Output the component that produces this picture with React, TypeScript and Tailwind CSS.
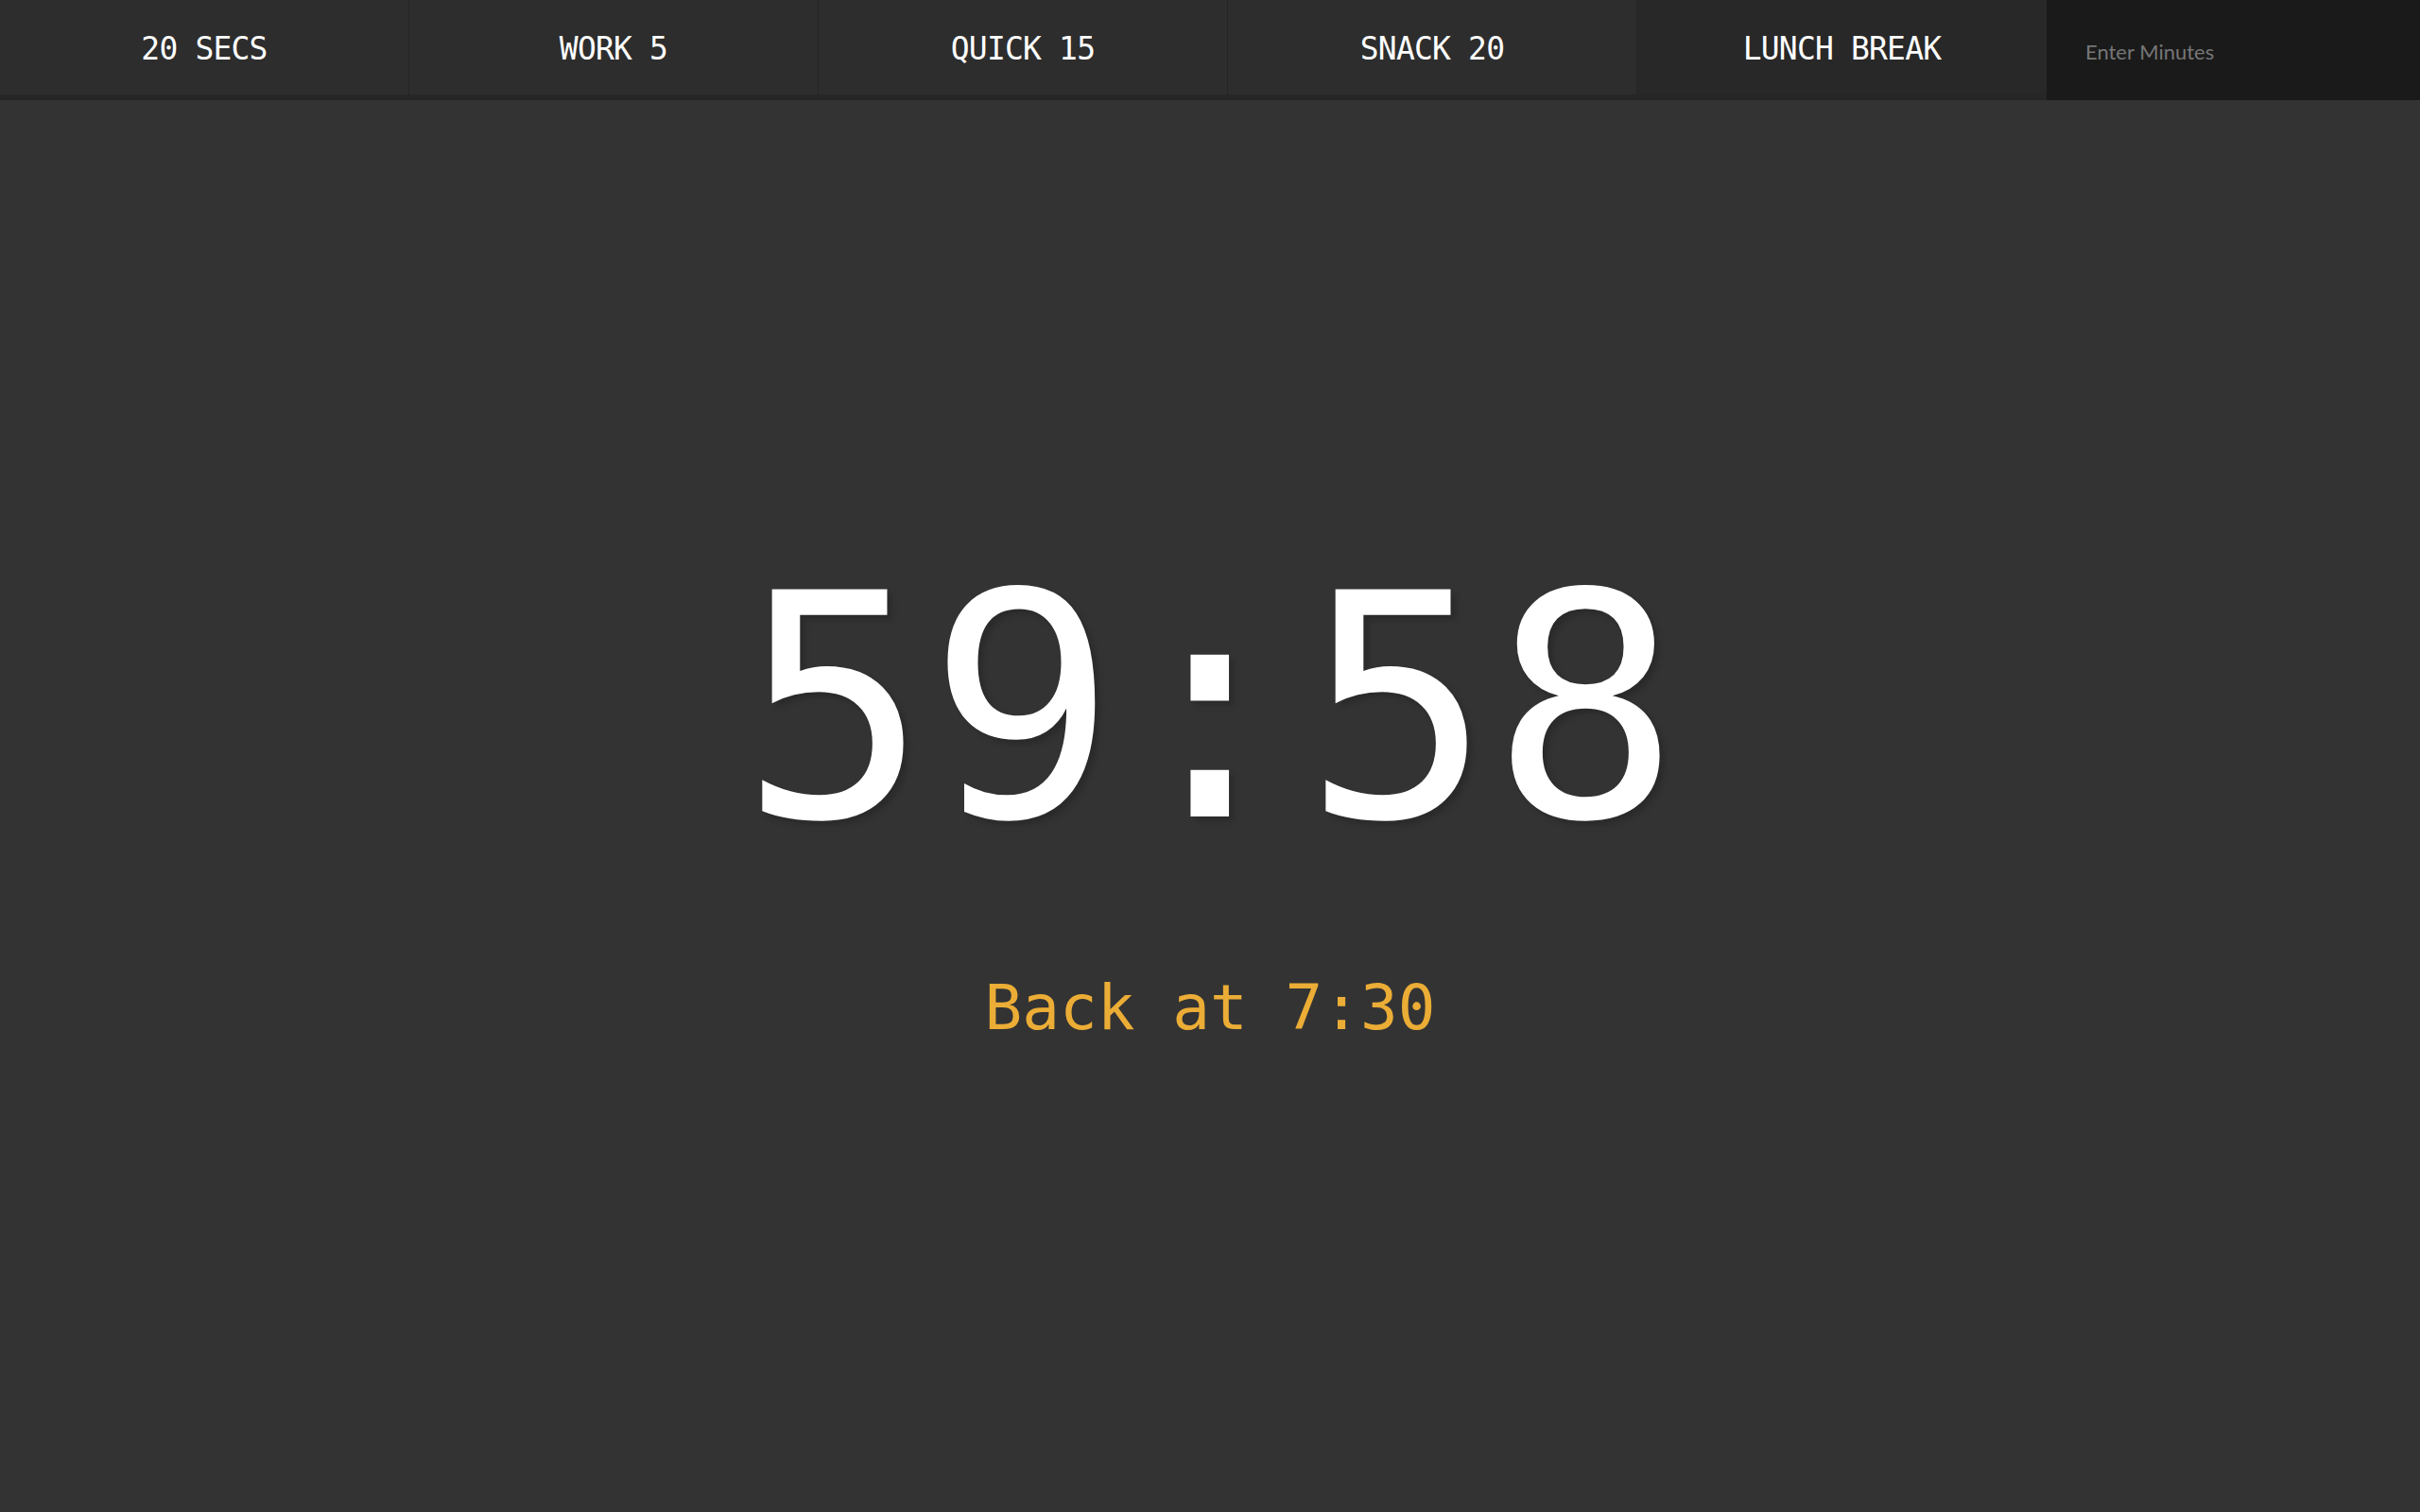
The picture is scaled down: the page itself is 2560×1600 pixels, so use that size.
import React from "react";

const presets = ["20 SECS", "WORK 5", "QUICK 15", "SNACK 20", "LUNCH BREAK"];

export default function App() {
    return (
        <div className="min-h-screen w-full bg-[#333333] flex flex-col">
            <nav className="flex h-[106px] shrink-0">
                {presets.map((label, i) => (
                    <button
                        key={label}
                        className={
                            i === presets.length - 1
                                ? "w-[433px] h-[106px] border-b-[6px] border-[#262626] bg-[#282828] text-white text-[33px] font-['DejaVu_Sans_Mono',monospace] tracking-tight flex items-center justify-center pt-[4px]"
                                : "w-[433px] h-[106px] border-b-[6px] border-b-[#262626] border-r border-r-[#252525] bg-[#2d2d2d] text-white text-[33px] font-['DejaVu_Sans_Mono',monospace] tracking-tight flex items-center justify-center pt-[4px]"
                        }
                    >
                        {label}
                    </button>
                ))}
                <input
                    placeholder="Enter Minutes"
                    className="flex-1 h-[106px] bg-[#1a1a1a] pl-[41px] pt-[2px] text-[22px] text-white placeholder:text-[#767676] font-['Lato',sans-serif] outline-none"
                />
            </nav>

            <main className="flex flex-col items-center pt-[479px]">
                <div className="text-white text-[330px] leading-none font-['DejaVu_Sans_Mono',monospace] [text-shadow:5px_5px_6px_rgba(0,0,0,0.18)]">
                    59:58
                </div>
                <div className="mt-[119px] text-[#ebad36] text-[66px] leading-none font-['DejaVu_Sans_Mono',monospace]">
                    Back at 7:30
                </div>
            </main>
        </div>
    );
}
